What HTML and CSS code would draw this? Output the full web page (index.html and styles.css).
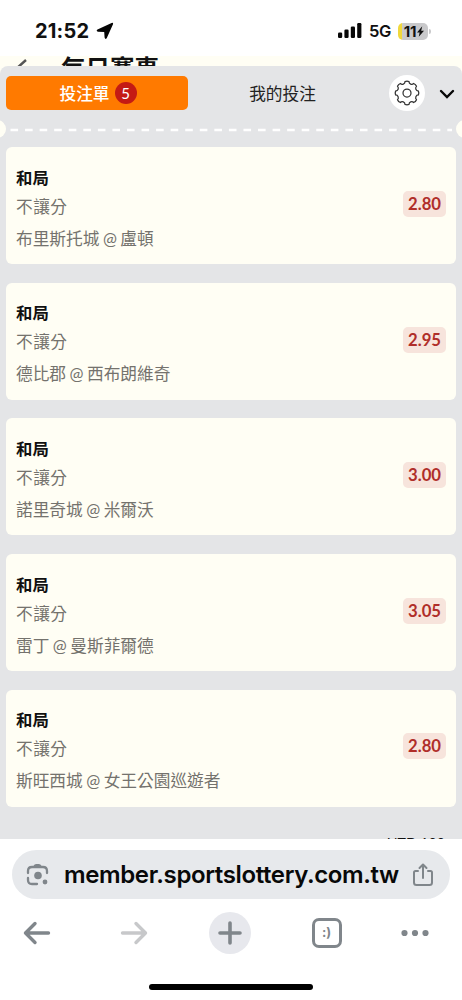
FILE: index.html
```html
<!DOCTYPE html>
<html lang="zh-Hant">
<head>
<meta charset="utf-8">
<title>投注單</title>
<link rel="stylesheet" href="styles.css">
</head>
<body>
<div class="phone">
  <header class="status">
    <div class="clock">21:52</div>
    <svg class="location" width="18" height="18" viewBox="0 0 18 18"><path d="M1.5 7.400 15.600.9Q17.500.3 17 2.200L10.800 16Q9.400 18 8.600 15.600L8.200 10 2 9.800Q-.3 8.800 1.500 7.400Z" fill="#050505"/></svg>
    <svg class="signal" width="24" height="16" viewBox="0 0 24 16" fill="#080808"><rect x="0" y="9.5" width="4.2" height="5.5" rx="1.2"/><rect x="6.4" y="6.5" width="4.2" height="8.5" rx="1.2"/><rect x="12.8" y="3.5" width="4.2" height="11.5" rx="1.2"/><rect x="19.2" y="0" width="4.2" height="15" rx="1.2"/></svg>
    <div class="network">5G</div>
    <div class="battery"><span>11</span><svg width="7" height="11" viewBox="0 0 8 12"><path d="M6 0 0 7h3L2 12 8 5H4.8Z" fill="#111"/></svg></div>
    <i class="battery-tip"></i>
  </header>
  <section class="site-head">
    <svg width="14" height="24" viewBox="0 0 14 24"><path d="M11 3 2 11l9 9" fill="none" stroke="#555" stroke-width="2.4"/></svg>
    <h1>每日賽事</h1>
  </section>
  <main class="sheet">
    <nav class="tabs">
      <div class="tab active">投注單<b>5</b></div>
      <div class="tab">我的投注</div>
      <div class="gear"><svg width="26" height="26" viewBox="-13 -13 26 26" fill="none" stroke="#333" stroke-width="1.25" stroke-linejoin="round"><path d="M-2-11.4Q0-12.2 2-11.4A2.7 2.7 0 0 0 6.65-9.5Q8.7-8.7 9.5-6.65A2.7 2.7 0 0 0 11.4-2Q12.2 0 11.4 2A2.7 2.7 0 0 0 9.5 6.65Q8.7 8.7 6.65 9.5A2.7 2.7 0 0 0 2 11.4Q0 12.2-2 11.4A2.7 2.7 0 0 0-6.65 9.5Q-8.7 8.7-9.5 6.65A2.7 2.7 0 0 0-11.4 2Q-12.2 0-11.4-2A2.7 2.7 0 0 0-9.5-6.65Q-8.7-8.7-6.65-9.5A2.7 2.7 0 0 0-2-11.4Z"/><circle r="4"/></svg></div>
      <svg class="chevron" width="16" height="10" viewBox="0 0 16 10"><path d="m2 2 6 6 6-6" fill="none" stroke="#080808" stroke-width="2.4" stroke-linecap="round"/></svg>
    </nav>
    <div class="divider"><i></i><svg width="450" height="4" viewBox="0 0 450 4"><path d="M4.500 2H446" stroke="#fff" stroke-width="2.4" stroke-dasharray="7.600 6.960"/></svg><i></i></div>
    <div class="bets">
      <article class="bet"><div><h2>和局</h2><p class="kind">不讓分</p><p class="match">布里斯托城 @ 盧頓</p></div><span class="odds">2.80</span></article>
      <article class="bet"><div><h2>和局</h2><p class="kind">不讓分</p><p class="match">德比郡 @ 西布朗維奇</p></div><span class="odds">2.95</span></article>
      <article class="bet"><div><h2>和局</h2><p class="kind">不讓分</p><p class="match">諾里奇城 @ 米爾沃</p></div><span class="odds">3.00</span></article>
      <article class="bet"><div><h2>和局</h2><p class="kind">不讓分</p><p class="match">雷丁 @ 曼斯菲爾德</p></div><span class="odds">3.05</span></article>
      <article class="bet"><div><h2>和局</h2><p class="kind">不讓分</p><p class="match">斯旺西城 @ 女王公園巡遊者</p></div><span class="odds">2.80</span></article>
    </div>
    <div class="stake">NTD 100</div>
  </main>
  <footer class="browser">
    <div class="address">
      <svg width="24" height="24" viewBox="0 0 24 24" fill="none" stroke="#80868b" stroke-width="2.3" stroke-linecap="round"><path d="M2 10V8q0-4 4-4h11q4 0 4 4v2M2 15v2q0 4 4 4h5"/><path d="M7 4q1-3 3-3h3q2 0 3 3Z" fill="#80868b" stroke="none"/><circle cx="12" cy="12.5" r="3.8" fill="#80868b" stroke="none"/><circle cx="19" cy="19" r="2.4" fill="#80868b" stroke="none"/></svg>
      <span class="url">member.sportslottery.com.tw</span>
      <svg width="22" height="24" viewBox="0 0 22 24" fill="none" stroke="#80868b" stroke-width="2" stroke-linecap="round" stroke-linejoin="round"><path d="M6 8H3.500Q2 8 2 9.500v10Q2 22 4.500 22h13q2.500 0 2.500-2.500v-10Q20 8 18.500 8H16M11 15V2M7.500 5 11 1.500 14.500 5"/></svg>
    </div>
    <div class="toolbar">
      <svg width="28" height="24" viewBox="0 0 28 24" fill="none" stroke="#80868b" stroke-width="3.4" stroke-linecap="round" stroke-linejoin="round"><path d="M25.500 12H2.500M12 2.500l-9.500 9.500 9.500 9.500"/></svg>
      <svg width="28" height="24" viewBox="0 0 28 24" fill="none" stroke="#c7c8ca" stroke-width="3.400" stroke-linecap="round" stroke-linejoin="round"><path d="M2.500 12h23M16 2.500l9.500 9.500-9.500 9.500"/></svg>
      <div class="plus"><svg width="26" height="26" viewBox="0 0 26 26"><path d="M13 3v20M3 13h20" fill="none" stroke="#80868b" stroke-width="3.600" stroke-linecap="round"/></svg></div>
      <div class="tabcount">:)</div>
      <svg width="28" height="8" viewBox="0 0 28 8" fill="#80868b"><circle cx="3.500" cy="4" r="3.100"/><circle cx="14" cy="4" r="3.100"/><circle cx="24.500" cy="4" r="3.100"/></svg>
    </div>
    <div class="home"></div>
  </footer>
</div>
</body>
</html>
```
FILE: styles.css
```css
* { box-sizing: border-box; margin: 0; padding: 0; }
body { background: #fff; font-family: Lato, "Noto Sans CJK TC", sans-serif; color: #111; }
svg { display: block; flex: none; }
.phone { width: 462px; height: 1000px; overflow: hidden; display: flex; flex-direction: column; }

.status { height: 56px; flex: none; display: flex; align-items: center; padding: 6px 0 0 35px; font-family: Inter, sans-serif; }
.clock { width: 61px; font-size: 20px; font-weight: 700; letter-spacing: .2px; }
.location { width: 18px; }
.signal { margin-left: 224px; }
.network { margin-left: 7px; width: 29px; font-size: 16.500px; font-weight: 600; white-space: nowrap; letter-spacing: -.3px; }
.battery { width: 30px; height: 17px; border-radius: 5px; display: flex; align-items: center; justify-content: center; gap: 1px; padding-left: 2px; background: linear-gradient(90deg, #f0d83c 4px, #c9c9cb 4px); font-size: 15px; font-weight: 700; letter-spacing: -.3px; }
.battery-tip { width: 2px; height: 5px; margin-left: 1px; border-radius: 0 2px 2px 0; background: #c9c9cb; }

.site-head { height: 20px; margin-bottom: -10px; flex: none; display: flex; background: #fffef4; padding: 1px 0 0 15px; overflow: hidden; }
.site-head h1 { margin: -3px 0 0 32px; font-size: 24.500px; line-height: 30px; font-weight: 700; }

.sheet { position: relative; height: 773px; flex: none; background: #e4e5e7; border-radius: 8px 8px 0 0; overflow: hidden; }
.tabs { display: flex; align-items: center; padding: 9px 7px 0 6px; height: 45px; }
.tab { width: 189px; height: 34px; display: flex; align-items: center; justify-content: center; font-size: 16.700px; color: #222; }
.tab.active { width: 182px; background: #ff7a00; color: #fff; border-radius: 5px; font-weight: 500; gap: 5px; padding-left: 2px; }
.tab b { width: 22px; height: 22px; border-radius: 50%; background: #c41b14; font-size: 15px; line-height: 22px; font-weight: 400; text-align: center; }
.gear { width: 36px; height: 36px; margin-left: 12px; border-radius: 50%; background: #fff; display: flex; align-items: center; justify-content: center; }
.chevron { margin: 2px 0 0 14px; }
.divider { height: 20px; margin: 8px -12px 0; display: flex; align-items: center; justify-content: space-between; }
.divider i { width: 18px; height: 18px; border-radius: 50%; background: #fffef4; flex: none; }
.divider svg { margin-top: 2px; }

.bets { display: flex; flex-direction: column; gap: 18.600px; padding: 8.300px 6px 0; }
.bet { height: 117px; display: flex; align-items: center; justify-content: space-between; padding: 0 10px; background: #fffef4; border-radius: 6px; }
.bet h2 { font-size: 16.400px; line-height: 26px; font-weight: 700; margin-top: 6px; }
.bet p { color: #74726d; font-size: 16.700px; white-space: nowrap; }
.kind { line-height: 28px; letter-spacing: .5px; margin-top: 2px; }
.match { line-height: 28px; margin-top: 4px; word-spacing: -.8px; }
.odds { width: 43px; height: 26px; margin-top: -3.500px; border-radius: 5px; background: #f7e4dc; color: #b02e29; font-weight: 700; font-size: 16.700px; line-height: 26px; text-align: center; }
.stake { padding: 26.700px 17px 0; text-align: right; font-size: 14.200px; line-height: 20px; }

.browser { flex: 1; background: #fff; padding: 11px 12px 0; }
.address { height: 49px; border-radius: 25px; background: #e7e9ec; display: flex; align-items: center; padding: 0 16px 0 14px; }
.url { width: 362px; padding-left: 14px; font: 600 24px/48px Inter, sans-serif; font-feature-settings: "calt" 0; letter-spacing: -.38px; color: #080808; white-space: nowrap; }
.toolbar { height: 42px; margin-top: 12.500px; display: grid; grid-template-columns: 50px 143px 50px 143px 33px; align-items: center; justify-items: center; }
.plus { width: 42px; height: 42px; border-radius: 50%; background: #e7e8ed; display: flex; align-items: center; justify-content: center; }
.tabcount { width: 30px; height: 30px; border: 3px solid #80868b; border-radius: 7px; color: #80868b; font: 700 13px/23px Inter, sans-serif; text-align: center; }
.home { width: 164px; height: 6px; border-radius: 3px; background: #000; margin: 30.500px auto 0; }
```
